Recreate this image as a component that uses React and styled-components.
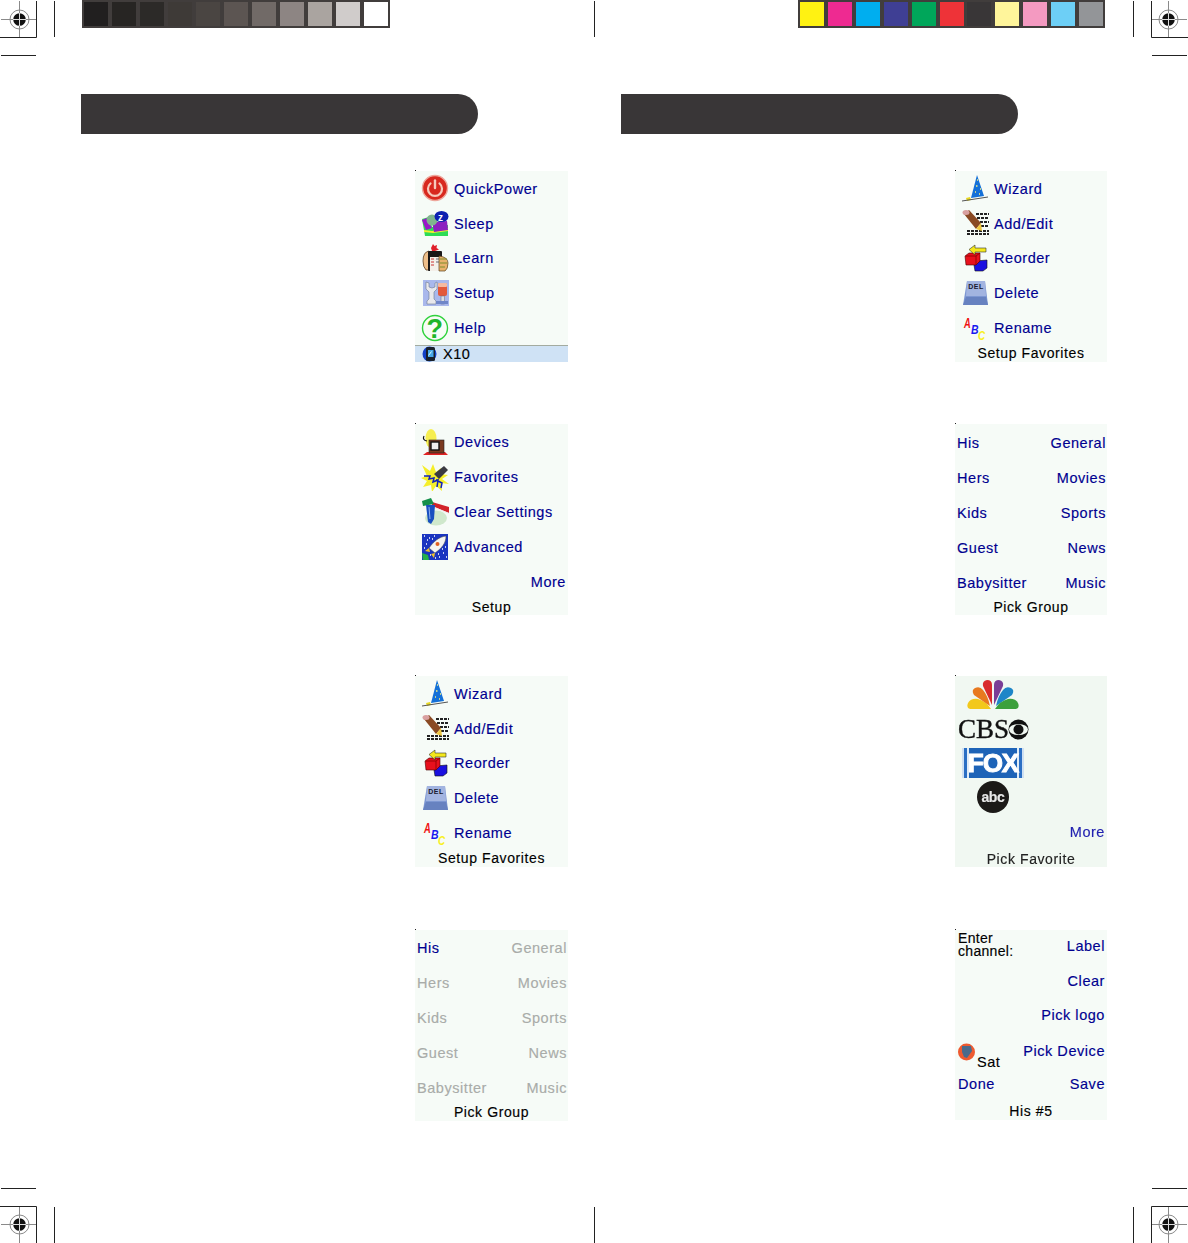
import React from "react";
import styled, { createGlobalStyle } from "styled-components";

const Global = createGlobalStyle`
  html, body { margin: 0; padding: 0; background: #fff; }
  body { font-family: "Liberation Sans", Arial, sans-serif; }
`;

const Sheet = styled.main`
  position: relative;
  width: 1188px;
  height: 1243px;
  overflow: hidden;
  background: #fff;
`;
const Strip = styled.header`
  display: flex;
  justify-content: space-between;
  padding: 0 83px 0 82px;
  height: 28px;
  margin-bottom: 66px;
`;
const ColourBar = styled.div`
  display: flex;
  gap: ${(p) => (p.$tight ? 3.9 : 4)}px;
  padding: 2px;
  height: 24px;
  background: #413d3c;
`;
const Swatch = styled.span`
  width: 24px;
  height: 24px;
  background: ${(p) => p.$c};
`;
const Columns = styled.div`
  display: grid;
  grid-template-columns: 540px 567px;
  padding-left: 81px;
`;
const Column = styled.section`
  display: flex;
  flex-direction: column;
`;
const Tab = styled.div`
  width: 397px;
  height: 40px;
  margin-bottom: 37px;
  background: #393637;
  border-radius: 0 20px 20px 0;
`;
const Stack = styled.div`
  display: grid;
  grid-template-rows: 253px 252px 254px auto;
  padding-left: 334px;
`;
const Screen = styled.article`
  position: relative;
  display: flex;
  flex-direction: column;
  width: ${(p) => p.$w}px;
  height: ${(p) => p.$h || 191}px;
  background: ${(p) => p.$bg || "#f6fbf7"};
  font-size: 14.5px;
  letter-spacing: 0.55px;
  line-height: 17px;
  color: #000090;
  -webkit-text-stroke: 0.15px currentColor;
  &::before {
    content: "";
    position: absolute;
    top: -1px;
    left: 0;
    width: 1px;
    height: 1px;
    background: #222;
  }
`;
const Menu = styled.ul`
  list-style: none;
  margin: 0;
  padding: 0;
  height: ${(p) => (p.$pitch || 34.8) * 5}px;
  flex: none;
  display: grid;
  grid-auto-rows: ${(p) => p.$pitch || 34.8}px;
`;
const MenuRow = styled.li`
  display: flex;
  align-items: center;
  gap: 5px;
  padding-left: 6px;
`;
const MenuLabel = styled.span`
  padding-top: 2px;
`;
const MoreRow = styled.li`
  display: flex;
  align-items: center;
  justify-content: flex-end;
  padding: 2px 2px 0 0;
`;
const IconBox = styled.svg`
  width: 28px;
  height: 28px;
  flex: none;
  display: block;
`;
const Title = styled.footer`
  flex: 1;
  display: flex;
  align-items: center;
  justify-content: center;
  color: #000;
  font-size: 14px;
  letter-spacing: 0.6px;
  padding-top: ${(p) => (p.$low ? 2 : 0)}px;
  ${(p) => p.$soft && "filter: blur(0.6px); color: #222;"}
`;
const StatusBar = styled.footer`
  flex: none;
  box-sizing: border-box;
  height: 17px;
  display: flex;
  align-items: center;
  gap: 5px;
  padding: 0 0 1px 7px;
  background: #cfe2f5;
  border-top: 1px solid #a3aba0;
  color: #000;
  font-size: 14.5px;
  line-height: 14px;
  letter-spacing: 0.5px;
`;
const GroupGrid = styled.ul`
  list-style: none;
  margin: 0;
  box-sizing: border-box;
  padding: 1.6px 1px 0 2px;
  height: ${(p) => (p.$pitch || 34.8) * 5}px;
  flex: none;
  display: grid;
  grid-template-columns: 1fr auto;
  grid-auto-rows: ${(p) => p.$pitch || 34.8}px;
  align-items: center;
`;
const Cell = styled.li`
  text-align: ${(p) => (p.$right ? "right" : "left")};
  color: ${(p) => (p.$off ? "#a9aca9" : "#000090")};
`;
const Logos = styled.div`
  height: 142px;
  padding-top: 4px;
  flex: none;
  display: flex;
  flex-direction: column;
  align-items: flex-start;
`;
const Peacock = styled.svg`
  width: 54px;
  height: 30px;
  margin-left: 11px;
  flex: none;
  filter: blur(0.3px);
`;
const CbsRow = styled.div`
  display: flex;
  align-items: center;
  height: 30px;
  margin: 4px 0 0 3px;
  font-family: "Liberation Serif", serif;
  font-size: 27px;
  letter-spacing: 0;
  color: #111;
  -webkit-text-stroke: 0.4px #111;
  filter: blur(0.3px);
`;
const CbsEye = styled.svg`
  width: 21px;
  height: 21px;
  margin-left: -1px;
`;
const FoxBox = styled.div`
  width: 62px;
  height: 30px;
  margin: 4px 0 0 7px;
  display: flex;
  align-items: center;
  justify-content: center;
  background: linear-gradient(90deg, #cfe0f2 0 3%, #2b6fc4 3% 8%, #e0ecf6 8% 12%, #1d63b7 12% 88%, #e0ecf6 88% 92%, #2b6fc4 92% 97%, #cfe0f2 97%);
  color: #fff;
  font: 900 26px "Liberation Sans", sans-serif;
  letter-spacing: -1px;
  -webkit-text-stroke: 1px #fff;
  filter: blur(0.4px);
`;
const AbcBadge = styled.div`
  width: 32px;
  height: 32px;
  margin: 3px 0 0 22px;
  border-radius: 50%;
  background: #1c1a18;
  color: #e8e8e8;
  display: flex;
  align-items: center;
  justify-content: center;
  font: 700 14px "Liberation Sans", sans-serif;
  letter-spacing: -0.3px;
  filter: blur(0.3px);
`;
const SoftMore = styled.div`
  height: 27px;
  padding-right: 2px;
  flex: none;
  text-align: right;
  line-height: 20px;
  filter: blur(0.5px);
  color: #2222b0;
`;
const ChannelGrid = styled.div`
  flex: none;
  display: grid;
  height: 171px;
  grid-template-columns: 1fr auto;
  grid-template-rows: 33px 36px 33px 38px 29px;
  align-items: center;
  padding: 0 2px 0 3px;
`;
const Prompt = styled.div`
  grid-row: 1 / span 1;
  align-self: start;
  padding-top: 2px;
  color: #000;
  font-size: 14px;
  line-height: 13px;
  letter-spacing: 0.3px;
`;
const Slot = styled.div`
  grid-column: 2;
  grid-row: ${(p) => p.$r};
  text-align: right;
`;
const SatWrap = styled.div`
  grid-column: 1;
  grid-row: 4;
  display: flex;
  align-items: flex-end;
  gap: 2px;
  color: #000;
  padding-top: 12px;
`;
const SatIcon = styled.svg`
  width: 17px;
  height: 18px;
  margin-bottom: 10px;
  flex: none;
`;
const DoneCell = styled.div`
  grid-column: 1;
  grid-row: 5;
`;
const Mark = styled.svg`
  position: absolute;
  width: 56px;
  height: 56px;
  ${(p) => (p.$right ? "right: 0;" : "left: 0;")}
  ${(p) => (p.$bottom ? "bottom: -1px;" : "top: 0;")}
  transform: scale(${(p) => (p.$right ? -1 : 1)}, ${(p) => (p.$bottom ? -1 : 1)});
`;
const CenterTick = styled.div`
  position: absolute;
  left: 594px;
  width: 1px;
  height: 36px;
  background: #222;
  ${(p) => (p.$bottom ? "bottom: 0;" : "top: 1px;")}
`;

const CropMark = (props) => (
  <Mark viewBox="0 0 56 56" {...props}>
    <g stroke="#8a8a8a" strokeWidth="1" fill="none">
      <path d="M1 19.5H36.5M19.5 1V37" />
      <circle cx="19.5" cy="19.5" r="9.5" />
    </g>
    <circle cx="19.5" cy="19.5" r="6.3" fill="#111" />
    <path d="M13 19.5H26M19.5 13V26" stroke="#ddd" strokeWidth="1" />
    <path d="M36.5 1V37.5H0M54.5 1V37M1 55.5H36" stroke="#222" strokeWidth="1" fill="none" />
  </Mark>
);

const Power = () => (
  <IconBox viewBox="0 0 28 28">
    <circle cx="14" cy="14" r="12.5" fill="#d8281e" stroke="#eea79c" strokeWidth="1.4" />
    <path d="M9.5 9.5a7 7 0 1 0 9 0" fill="none" stroke="#f6c9bb" strokeWidth="2.2" strokeLinecap="round" />
    <path d="M14 6.5V14" stroke="#f6c9bb" strokeWidth="2.4" strokeLinecap="round" />
  </IconBox>
);
const Sleep = () => (
  <IconBox viewBox="0 0 28 28">
    <path d="M1 10l7-2 3 10 16-2v11H4z" fill="#2ddc55" />
    <path d="M3 21l8 1 16-3v3l-15 2-9-1z" fill="#f2ee30" />
    <path d="M1 11l5-2 5 10-6 2z" fill="#9a18c8" />
    <path d="M11 13l15-1 1 9-14 2z" fill="#8c1fc0" />
    <circle cx="11" cy="11" r="5.5" fill="#7fb58d" />
    <ellipse cx="20.5" cy="7.5" rx="7" ry="5.5" fill="#0d1fb0" />
    <text x="17" y="11.5" fontSize="10" fontWeight="700" fontFamily="Liberation Sans" fill="#fff">z</text>
  </IconBox>
);
const Learn = () => (
  <IconBox viewBox="0 0 28 28">
    <path d="M12 0l1.5 2 2.5-1-.5 3 2.5 1.5-4 1.5h-3l-1-3z" fill="#e0202a" />
    <path d="M2 17q0-9 6-10v19H5q-3-3-3-9z" fill="#eebf8a" stroke="#4a2c10" strokeWidth=".7" />
    <rect x="7" y="7" width="14" height="20" rx="1" fill="#1a1818" />
    <rect x="9" y="13" width="10" height="14" fill="#f4f0ea" />
    <path d="M10 15h3M10 18h3M10 21h3" stroke="#c33" strokeWidth="1.2" />
    <path d="M15 15h3M15 18h3" stroke="#667" strokeWidth="1.2" />
    <path d="M18 12q9 1 9 7t-3 8h-6z" fill="#e8b26c" stroke="#5a4420" strokeWidth=".7" />
    <path d="M19 15h7M19 19h7M19 23h5" stroke="#7c8b2c" strokeWidth="1.2" />
  </IconBox>
);
const Setup = () => (
  <IconBox viewBox="0 0 28 28">
    <rect x="2" y="1" width="26" height="26" fill="#a9b8ec" />
    <path d="M5 3v7l3 3v7l-2 2v3h9v-3l-2-2v-7l3-3V3l-2 1v4l-3 1-3-1V4z" fill="#e8e8ec" stroke="#6c7890" strokeWidth=".6" />
    <rect x="17" y="4" width="9" height="13" rx="2" fill="#e2583a" />
    <rect x="17" y="4" width="9" height="4" rx="1" fill="#f5b9a0" />
    <rect x="20" y="17" width="3.5" height="8" fill="#d9dce4" stroke="#667" strokeWidth=".5" />
    <rect x="15" y="22" width="12" height="3" fill="#6f86c8" />
  </IconBox>
);
const Help = () => (
  <IconBox viewBox="0 0 28 28">
    <circle cx="14" cy="14" r="12.5" fill="#f8fcf6" stroke="#2fd23c" strokeWidth="1.4" />
    <text x="14" y="23.5" textAnchor="middle" fontSize="27" fontWeight="700" fontFamily="Liberation Sans" fill="#1fb52a">?</text>
  </IconBox>
);
const Globe = () => (
  <IconBox viewBox="0 0 16 16" style={{ width: 16, height: 16 }}>
    <ellipse cx="7.5" cy="8" rx="7" ry="7.5" fill="#1240c8" />
    <rect x="4" y="1" width="9" height="14" rx="1.5" fill="#18202c" />
    <rect x="6" y="4" width="5.5" height="7" fill="#48a8e8" />
    <path d="M6.5 9.5l3-4" stroke="#dff" strokeWidth="1" />
  </IconBox>
);
const Devices = () => (
  <IconBox viewBox="0 0 28 28">
    <ellipse cx="10" cy="10.5" rx="5.5" ry="9.5" fill="#f6ee50" />
    <path d="M3 8q-2 4 3 5" fill="none" stroke="#111" strokeWidth="1.2" />
    <path d="M2 27l4-3h18l3 3z" fill="#e02222" />
    <rect x="8" y="12" width="15" height="13" fill="#7a3a20" stroke="#222" strokeWidth=".6" />
    <rect x="10" y="14" width="8" height="8" fill="#eee" stroke="#111" strokeWidth="1.4" />
  </IconBox>
);
const Favorites = () => (
  <IconBox viewBox="0 0 28 28">
    <path d="M1 2l8 6 3-7 3 8 5-4-1 6 8 1-6 4 7 5-8-1 1 8-6-5-4 6-1-7-8 2 4-6-6-3 6-2z" fill="#f5ee2a" />
    <path d="M13 11l10-8 4 4-9 9z" fill="#3a3a42" />
    <path d="M3 13h6l-1 3 5-1-1 4 5-2-1 7M15 17l6 3-1 5" fill="none" stroke="#1020b8" strokeWidth="1.5" />
  </IconBox>
);
const Clear = () => (
  <IconBox viewBox="0 0 28 28">
    <ellipse cx="15" cy="20" rx="11" ry="7.5" fill="#cfe8cc" />
    <path d="M11 4l17 5v6L11 8z" fill="#d2232a" />
    <path d="M11 8l17 7v1L10 9z" fill="#eee" />
    <path d="M1 3l9-3 3 6-11 2z" fill="#14904a" />
    <path d="M5 7h9l-1 14-3 5-3-2z" fill="#1850c0" />
    <path d="M8 9l1 12" stroke="#8fb0f0" strokeWidth="1" />
  </IconBox>
);
const Advanced = () => (
  <IconBox viewBox="0 0 28 28">
    <rect x="1" y="1" width="26" height="26" fill="#1a35c0" />
    <path d="M3 3h1M8 5h1M22 20h1M18 24h1M5 11h1M24 14h1M13 3h1M9 22h1M14 25h1M3 15h1M25 24h1M21 16h1M17 21h1M11 6h1M6 7h1" stroke="#fff" strokeWidth="1.5" />
    <path d="M25 3c0 7-4 12-11 17l-6-5C13 8 18 4 25 3z" fill="#f4f4f0" stroke="#444" strokeWidth=".5" />
    <path d="M8 15l-4 3 5 1zM14 20l-1 5-3-4z" fill="#f2c22c" />
    <circle cx="16.5" cy="11" r="2" fill="#e06020" />
    <path d="M1 20l6 2 1 5H2z" fill="#26b04a" />
  </IconBox>
);
const Wizard = () => (
  <IconBox viewBox="0 0 28 28">
    <path d="M16 1l7 21-13 2z" fill="#1470d8" />
    <path d="M16 6h1M15 12h1.5M19 15h1M14 18h1M18 20h1" stroke="#f4f080" strokeWidth="1.5" />
    <path d="M5 24l4-1 1 3-4 1z" fill="#e8d820" />
    <path d="M1 27l26-4" stroke="#555" strokeWidth="1" />
  </IconBox>
);
const AddEdit = () => (
  <IconBox viewBox="0 0 28 28">
    <path d="M15 5h13M16 9h12M19 13h9M20 17h8M6 22h22M6 25h22" stroke="#222" strokeWidth="1.8" strokeDasharray="3 1" />
    <path d="M3 5l5-4 12 13-5 6z" fill="#8a4a24" />
    <path d="M15 20l5-6 1 8z" fill="#f0c840" />
    <ellipse cx="5" cy="3.5" rx="3.5" ry="2.5" fill="#d9a0a0" />
  </IconBox>
);
const Reorder = () => (
  <IconBox viewBox="0 0 28 28">
    <path d="M15 17l11-1v8l-4 3H14l-1-6z" fill="#1a10e0" stroke="#111" strokeWidth=".6" />
    <path d="M4 12l4-3h11v8l-4 4H5z" fill="#e8101c" stroke="#400" strokeWidth=".6" />
    <path d="M5 12h10v9M15 12l4-3" fill="none" stroke="#800" strokeWidth=".8" />
    <path d="M8 5.5L14 1v3h11v4H14v3z" fill="#f4e81c" stroke="#333" strokeWidth=".6" />
  </IconBox>
);
const DeleteKey = () => (
  <IconBox viewBox="0 0 28 28">
    <path d="M6 2h18l3 24H2z" fill="#7d97d2" />
    <path d="M6 2h18l1 15H5z" fill="#a2b4e0" />
    <path d="M2 26l3-8h20l2 8z" fill="#6782c0" />
    <text x="15" y="9.5" textAnchor="middle" fontSize="7" fontWeight="700" fontFamily="Liberation Sans" fill="#1a1a30">DEL</text>
  </IconBox>
);
const AbcIcon = () => (
  <IconBox viewBox="0 0 28 28">
    <g fontFamily="Liberation Sans" fontStyle="italic" fontWeight="700" fontSize="11">
      <text transform="translate(3 14) scale(.85 1.35)" fill="#f01010">A</text>
      <text transform="translate(10 20) scale(.95 1.1)" fill="#1818f0">B</text>
      <text transform="translate(17 26) scale(.9 1.15)" fill="#f8f020">C</text>
    </g>
  </IconBox>
);

const ICONS = { Power, Sleep, Learn, Setup, Help, Devices, Favorites, Clear, Advanced, Wizard, AddEdit, Reorder, DeleteKey, AbcIcon };

const IconMenu = ({ items, more, pitch }) => (
  <Menu $pitch={pitch}>
    {items.map(([icon, label]) => {
      const I = ICONS[icon];
      return (
        <MenuRow key={label}>
          <I />
          <MenuLabel>{label}</MenuLabel>
        </MenuRow>
      );
    })}
    {more && <MoreRow>More</MoreRow>}
  </Menu>
);

const GroupList = ({ onlyFirst, pitch }) => {
  const rows = [["His", "General"], ["Hers", "Movies"], ["Kids", "Sports"], ["Guest", "News"], ["Babysitter", "Music"]];
  return (
    <GroupGrid $pitch={pitch}>
      {rows.flatMap(([a, b], i) => [
        <Cell key={a} $off={onlyFirst && i > 0}>{a}</Cell>,
        <Cell key={b} $right $off={onlyFirst}>{b}</Cell>,
      ])}
    </GroupGrid>
  );
};

const PetalPeacock = () => {
  const petals = [
    ["#f2c81c", "M25 29H4q-4-1-2-6 3-5 10-4 8 2 13 10z"],
    ["#e8791f", "M24 26L8 15Q5 10 9 8q5-2 8 2 5 6 7 16z"],
    ["#d92a2c", "M26 25L17 6q-1-5 4-6 5 0 5 5z"],
    ["#7a3e96", "M28 25l9-19q1-5-4-6-5 0-5 5z"],
    ["#1e86c8", "M30 26l16-11q3-5-1-7-5-2-8 2-5 6-7 16z"],
    ["#3ca03c", "M29 29h21q4-1 2-6-3-5-10-4-8 2-13 10z"],
  ];
  return (
    <Peacock viewBox="0 0 54 30">
      {petals.map(([c, d]) => <path key={c} d={d} fill={c} />)}
    </Peacock>
  );
};

const Favs = [["Wizard", "Wizard"], ["AddEdit", "Add/Edit"], ["Reorder", "Reorder"], ["DeleteKey", "Delete"], ["AbcIcon", "Rename"]];
const Main = [["Power", "QuickPower"], ["Sleep", "Sleep"], ["Learn", "Learn"], ["Setup", "Setup"], ["Help", "Help"]];
const SetupItems = [["Devices", "Devices"], ["Favorites", "Favorites"], ["Clear", "Clear Settings"], ["Advanced", "Advanced"]];

const GRAYS = ["#211f1f", "#272523", "#2c2a28", "#3e3a37", "#4a4542", "#5c5552", "#716a67", "#8d8583", "#aaa4a0", "#d0cccb", "#ffffff"];
const INKS = ["#fff212", "#ee2a91", "#00aeef", "#3f3f94", "#00a65a", "#ee3338", "#393637", "#fff59b", "#f49ac1", "#6dcff6", "#939598"];

export default function App() {
  return (
    <Sheet>
      <Global />
      <Strip>
        <ColourBar>{GRAYS.map((c) => <Swatch key={c} $c={c} />)}</ColourBar>
        <ColourBar $tight>{INKS.map((c) => <Swatch key={c} $c={c} />)}</ColourBar>
      </Strip>
      <Columns>
        <Column>
          <Tab />
          <Stack>
            <Screen $w={153}>
              <IconMenu items={Main} />
              <StatusBar><Globe />X10</StatusBar>
            </Screen>
            <Screen $w={153}>
              <IconMenu items={SetupItems} more pitch={35} />
              <Title>Setup</Title>
            </Screen>
            <Screen $w={153}>
              <IconMenu items={Favs} />
              <Title>Setup Favorites</Title>
            </Screen>
            <Screen $w={153}>
              <GroupList onlyFirst />
              <Title>Pick Group</Title>
            </Screen>
          </Stack>
        </Column>
        <Column>
          <Tab />
          <Stack>
            <Screen $w={152}>
              <IconMenu items={Favs} />
              <Title>Setup Favorites</Title>
            </Screen>
            <Screen $w={152}>
              <GroupList pitch={35} />
              <Title>Pick Group</Title>
            </Screen>
            <Screen $w={152} $bg="#f1f8f2">
              <Logos>
                <PetalPeacock />
                <CbsRow>
                  CBS
                  <CbsEye viewBox="0 0 21 21">
                    <circle cx="10.5" cy="10.5" r="10" fill="#111" />
                    <ellipse cx="10.5" cy="10.5" rx="9.5" ry="5.6" fill="#f1f8f2" />
                    <circle cx="10.5" cy="10.5" r="5" fill="#111" />
                  </CbsEye>
                </CbsRow>
                <FoxBox>FOX</FoxBox>
                <AbcBadge>abc</AbcBadge>
              </Logos>
              <SoftMore>More</SoftMore>
              <Title $soft $low>Pick Favorite</Title>
            </Screen>
            <Screen $w={152} $h={190}>
              <ChannelGrid>
                <Prompt>Enter<br />channel:</Prompt>
                <Slot $r={1}>Label</Slot>
                <Slot $r={2}>Clear</Slot>
                <Slot $r={3}>Pick logo</Slot>
                <SatWrap>
                  <SatIcon viewBox="0 0 17 18">
                    <circle cx="8.5" cy="9" r="8.5" fill="#ee5a30" />
                    <path d="M4 3h9l1 5-5 7-3-1-2-5z" fill="#4a6a8c" />
                  </SatIcon>
                  Sat
                </SatWrap>
                <Slot $r={4}>Pick Device</Slot>
                <DoneCell>Done</DoneCell>
                <Slot $r={5}>Save</Slot>
              </ChannelGrid>
              <Title $low>His #5</Title>
            </Screen>
          </Stack>
        </Column>
      </Columns>
      <CropMark />
      <CropMark $right />
      <CropMark $bottom />
      <CropMark $right $bottom />
      <CenterTick />
      <CenterTick $bottom />
    </Sheet>
  );
}
